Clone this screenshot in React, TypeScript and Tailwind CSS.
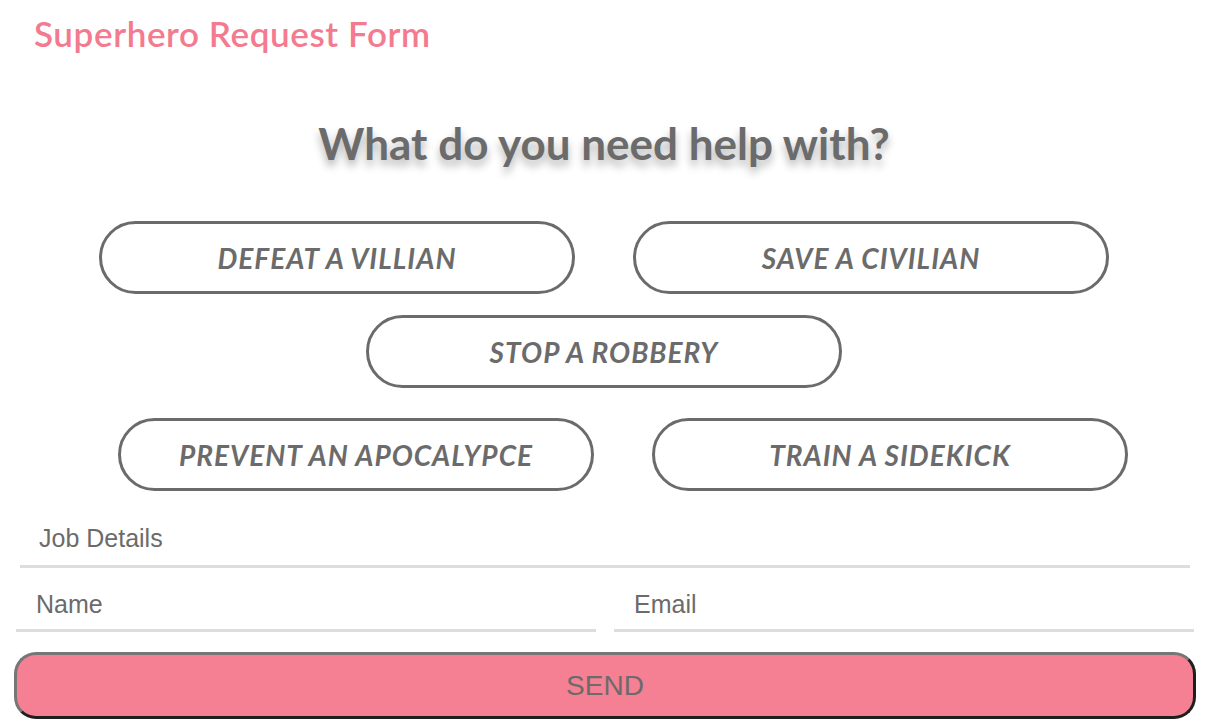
const tasks = [
  ["Defeat a villian", "Save a civilian"],
  ["Stop a robbery"],
  ["Prevent an apocalypce", "Train a sidekick"],
]

function TaskButton({ label }: { label: string }) {
  return (
    <button
      type="button"
      className="w-[476px] h-[73px] rounded-full border-[3px] border-[#6b6b6b] bg-white text-[#6b6b6b] uppercase italic font-bold text-[28px] font-['Lato',sans-serif] tracking-[1px]"
    >
      {label}
    </button>
  )
}

export default function App() {
  return (
    <div className="w-[1208px] h-[724px] bg-white overflow-hidden">
      <h1 className="pl-[34px] pt-[10px] text-[35px] leading-[46px] font-semibold text-[#f47a8f] font-['Lato',sans-serif] tracking-[0.6px]">
        Superhero Request Form
      </h1>

      <h2 className="mt-[60px] text-center text-[44px] leading-[54px] font-bold text-[#6b6b6b] font-['Lato',sans-serif] [text-shadow:0_6px_8px_rgba(0,0,0,0.3)]">
        What do you need help with?
      </h2>

      <div className="mt-[51px] flex flex-col items-center">
        <div className="flex gap-[58px]">
          {tasks[0].map((t) => (
            <TaskButton key={t} label={t} />
          ))}
        </div>
        <div className="mt-[21px] flex gap-[58px]">
          {tasks[1].map((t) => (
            <TaskButton key={t} label={t} />
          ))}
        </div>
        <div className="mt-[30px] ml-[38px] flex gap-[58px]">
          {tasks[2].map((t) => (
            <TaskButton key={t} label={t} />
          ))}
        </div>
      </div>

      <form className="font-['Liberation_Sans',Arial,sans-serif]">
        <div className="mt-[18px] pl-[20px] pr-[18px]">
          <input
            type="text"
            placeholder="Job Details"
            className="w-full h-[59px] pl-[19px] pt-[2px] text-[25px] text-[#6b6b6b] placeholder:text-[#6b6b6b] border-b-[3px] border-[#dddddd] outline-none"
          />
        </div>
        <div className="mt-[2px] flex gap-[18px] pl-[16px] pr-[14px]">
          <input
            type="text"
            placeholder="Name"
            className="w-[580px] h-[62px] pl-[20px] pt-[10px] text-[25px] text-[#6b6b6b] placeholder:text-[#6b6b6b] border-b-[3px] border-[#dddddd] outline-none"
          />
          <input
            type="email"
            placeholder="Email"
            className="w-[580px] h-[62px] pl-[20px] pt-[10px] text-[25px] text-[#6b6b6b] placeholder:text-[#6b6b6b] border-b-[3px] border-[#dddddd] outline-none"
          />
        </div>
        <div className="mt-[20px] px-[14px]">
          <button
            type="button"
            className="w-[1182px] h-[67px] rounded-[22px] bg-[#f57f93] text-[#6b6b6b] text-[28px] border-[3px] border-t-[#767676] border-l-[#767676] border-r-[#1f1f1f] border-b-[#1f1f1f]"
          >
            SEND
          </button>
        </div>
      </form>
    </div>
  )
}
